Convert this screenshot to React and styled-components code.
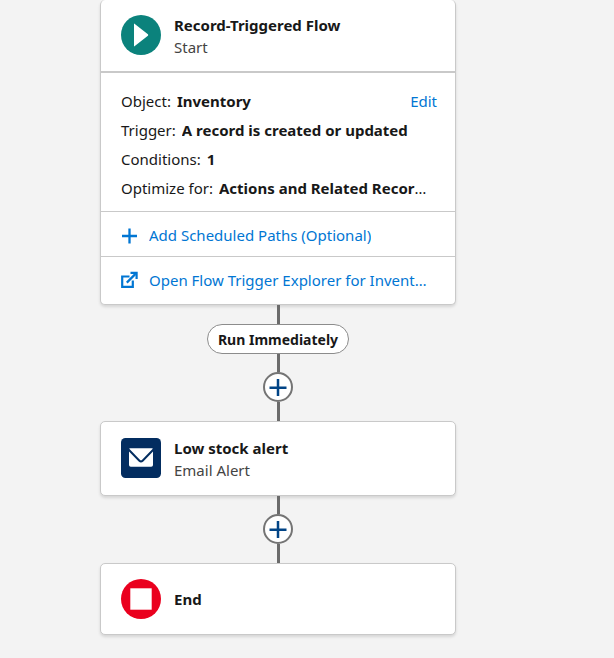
import React from "react";
import styled, { createGlobalStyle } from "styled-components";

const GlobalStyle = createGlobalStyle`
  *, *::before, *::after { box-sizing: border-box; }
  body {
    margin: 0;
    background: #f3f3f3;
    color: #181818;
    font-family: "Noto Sans", "Open Sans", sans-serif;
    font-size: 15px;
    line-height: 22px;
  }
`;

const Canvas = styled.main`
  display: flex;
  flex-direction: column;
  align-items: center;
  min-height: 100vh;
  padding: 0 58px 23px 0;
  background: #f3f3f3;
`;

const Card = styled.section`
  width: 100%;
  max-width: 356px;
  background: #fff;
  border: 1px solid #c9c9c9;
  border-top-width: ${(p) => (p.$cutTop ? 0 : "1px")};
  border-radius: 5px;
  box-shadow: 0 2px 3px rgba(0, 0, 0, 0.12);
`;

const NodeHeader = styled.header`
  display: flex;
  align-items: center;
  gap: 13px;
  min-height: ${(p) => (p.$tall ? "73px" : "70px")};
  padding: 0 20px;
`;

const StartHeader = styled(NodeHeader)`
  border-bottom: 2px solid #c9c9c9;
`;

const NodeIcon = styled.svg`
  flex: none;
  display: block;
  width: 40px;
  height: 40px;
  margin-bottom: ${(p) => (p.$raised ? "2px" : 0)};
`;

const Title = styled.h2`
  margin: 0;
  font-size: 15px;
  line-height: 22px;
  font-weight: 700;
`;

const Subtitle = styled.p`
  margin: 0;
  color: #444;
`;

const Details = styled.dl`
  margin: 0;
  padding: 14px 18px 8px 20px;
`;

const Detail = styled.div`
  display: flex;
  gap: 6px;
  line-height: 29px;
`;

const Term = styled.dt`
  flex: none;
`;

const Value = styled.dd`
  flex: 1;
  min-width: 0;
  margin: 0;
  overflow: hidden;
  white-space: nowrap;
  text-overflow: ellipsis;
`;

const Link = styled.a`
  color: #0176d3;
  text-decoration: none;
  &:hover { text-decoration: underline; }
`;

const ActionRow = styled.div`
  display: flex;
  align-items: center;
  min-height: ${(p) => (p.$last ? "48px" : "45px")};
  padding: ${(p) => (p.$last ? "0 20px 2px" : "2px 20px 0")};
  border-top: 1px solid #c9c9c9;
`;

const ActionLink = styled(Link)`
  display: flex;
  align-items: center;
  gap: 11px;
  min-width: 0;
`;

const ActionIcon = styled.svg`
  flex: none;
  width: 17px;
  height: 17px;
`;

const ActionText = styled.span`
  min-width: 0;
  overflow: hidden;
  white-space: nowrap;
  text-overflow: ellipsis;
`;

const Connector = styled.div`
  display: flex;
  flex-direction: column;
  align-items: center;
`;

const Line = styled.div`
  width: 3px;
  height: ${(p) => (p.$short ? "18px" : "19px")};
  background: #6b6b6b;
`;

const PathLabel = styled.div`
  height: 30px;
  padding: 0 10px;
  border: 1px solid #8c8c8c;
  border-radius: 15px;
  background: #fff;
  font-weight: 700;
  font-size: 14px;
  line-height: 29px;
`;

const AddButton = styled.button`
  display: grid;
  place-items: center;
  width: 30px;
  height: 30px;
  padding: 0;
  border: 2px solid #747474;
  border-radius: 50%;
  background: #fff;
  color: #014486;
  cursor: pointer;
`;

const AddIcon = styled.svg`
  display: block;
  width: 18px;
  height: 18px;
`;

function AddElement() {
  return (
    <AddButton type="button" aria-label="Add element">
      <AddIcon viewBox="0 0 18 18" aria-hidden="true">
        <path d="M9 1v17M.5 9.7h17" stroke="currentColor" strokeWidth="2.5" />
      </AddIcon>
    </AddButton>
  );
}

export default function App() {
  return (
    <>
      <GlobalStyle />
      <Canvas>
        <Card $cutTop>
          <StartHeader $tall>
            <NodeIcon $raised viewBox="0 0 40 40" aria-hidden="true">
              <circle cx="20" cy="20" r="20" fill="#0b827c" />
              <path d="M13 9.2v21.6q0 1 .8.3L26.9 20.7q.7-.7 0-1.4L13.8 8.9q-.8-.7-.8.3z" fill="#fff" />
            </NodeIcon>
            <div>
              <Title>Record-Triggered Flow</Title>
              <Subtitle>Start</Subtitle>
            </div>
          </StartHeader>
          <Details>
            <Detail>
              <Term>Object:</Term>
              <Value><b>Inventory</b></Value>
              <Link href="#edit">Edit</Link>
            </Detail>
            <Detail>
              <Term>Trigger:</Term>
              <Value><b>A record is created or updated</b></Value>
            </Detail>
            <Detail>
              <Term>Conditions:</Term>
              <Value><b>1</b></Value>
            </Detail>
            <Detail>
              <Term>Optimize for:</Term>
              <Value><b>Actions and Related Recor</b>…</Value>
            </Detail>
          </Details>
          <ActionRow>
            <ActionLink href="#scheduled-paths">
              <ActionIcon viewBox="0 0 17 17" aria-hidden="true">
                <path d="M8.5 1.5v15M1 9h15" stroke="currentColor" strokeWidth="2.3" />
              </ActionIcon>
              <ActionText>Add Scheduled Paths (Optional)</ActionText>
            </ActionLink>
          </ActionRow>
          <ActionRow $last>
            <ActionLink href="#trigger-explorer">
              <ActionIcon viewBox="0 0 17 17" aria-hidden="true">
                <path d="M8.5 5.5H1.2v10.3h10.6V9.5M5.8 11.6L14.5 2.9" fill="none" stroke="currentColor" strokeWidth="2.2" />
                <path d="M9.5.8h7.200v7.200h-2.200V3h-5z" fill="currentColor" />
              </ActionIcon>
              <ActionText>Open Flow Trigger Explorer for Invent…</ActionText>
            </ActionLink>
          </ActionRow>
        </Card>

        <Connector>
          <Line />
          <PathLabel>Run Immediately</PathLabel>
          <Line $short />
          <AddElement />
          <Line />
        </Connector>

        <Card>
          <NodeHeader $tall>
            <NodeIcon $raised viewBox="0 0 40 40" aria-hidden="true">
              <rect width="40" height="40" rx="4.5" fill="#032d60" />
              <path d="M8.6 10.2h22.8q.5.3.1.7L20.9 22q-.9.8-1.8 0L8.5 10.9q-.4-.4.1-.7z" fill="#fff" />
              <path d="M8 13.5l9.7 10q2.3 2 4.6 0l9.7-10V27q0 1.8-1.8 1.8H9.8Q8 28.8 8 27z" fill="#fff" />
            </NodeIcon>
            <div>
              <Title>Low stock alert</Title>
              <Subtitle>Email Alert</Subtitle>
            </div>
          </NodeHeader>
        </Card>

        <Connector>
          <Line $short />
          <AddElement />
          <Line />
        </Connector>

        <Card>
          <NodeHeader>
            <NodeIcon viewBox="0 0 40 40" aria-hidden="true">
              <circle cx="20" cy="20" r="20" fill="#ea001e" />
              <path d="M9.3 9.3h21.4v21.4H9.3z" fill="#fff" />
            </NodeIcon>
            <Title>End</Title>
          </NodeHeader>
        </Card>
      </Canvas>
    </>
  );
}
